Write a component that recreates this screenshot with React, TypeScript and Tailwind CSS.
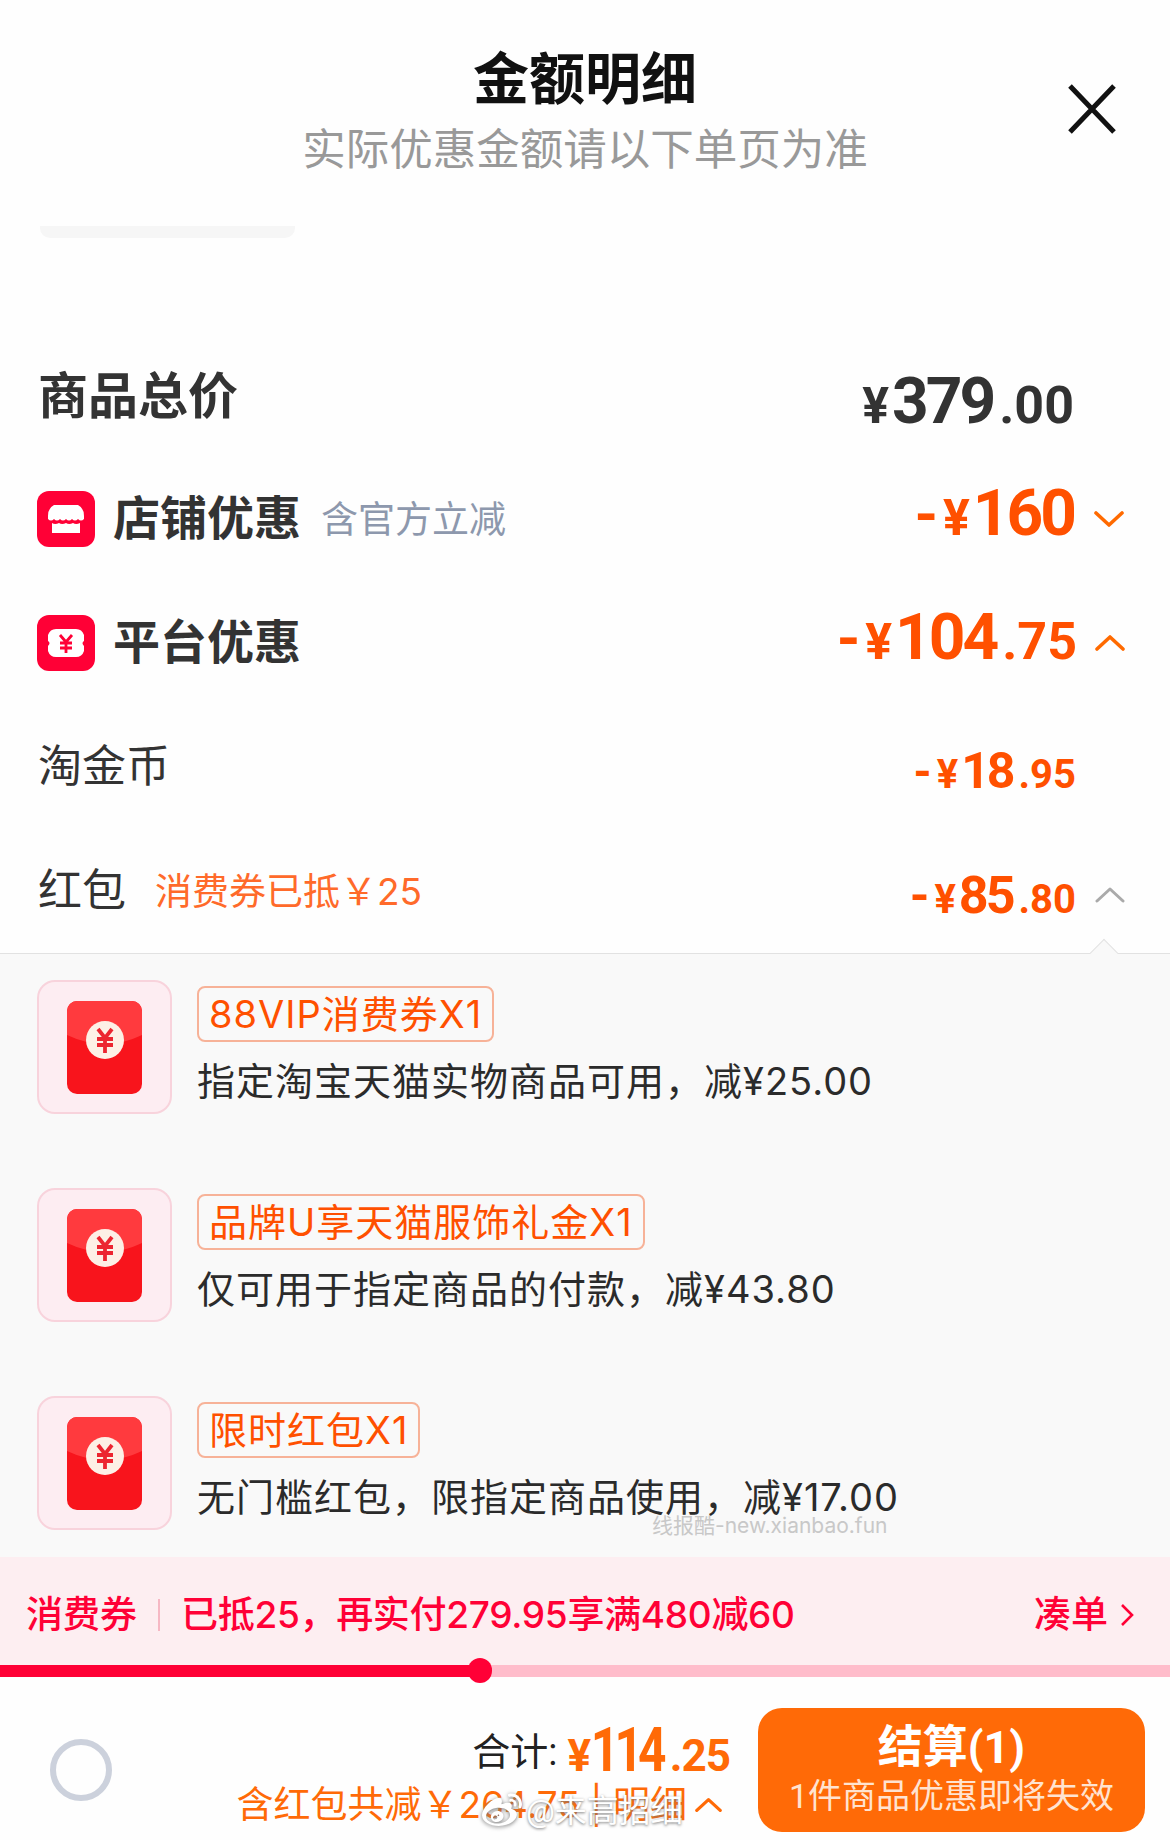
import React from "react";
import { FaWeibo } from "react-icons/fa";

const Amount = ({
  minus,
  minusSize,
  yen,
  big,
  tail,
  bigSize,
  tailSize,
  color,
}: {
  minus?: boolean;
  minusSize?: string;
  yen: string;
  big: string;
  tail?: string;
  bigSize: string;
  tailSize: string;
  color: string;
}) => (
  <div className={`flex items-baseline font-bold ${color}`}>
    {minus && <span className={`${minusSize} mr-[5px]`}>-</span>}
    <span className={`${yen} mr-[3px]`}>¥</span>
    <span className={`${bigSize} tracking-[-3px]`}>{big}</span>
    {tail && <span className={`${tailSize} ml-[6px]`}>{tail}</span>}
  </div>
);

const Chevron = ({ up, color, width = 3.6, size = 30 }: { up?: boolean; color: string; width?: number; size?: number }) => (
  <svg width={size} height="18" viewBox="0 0 30 18" fill="none">
    <path
      d={up ? "M2 15 L15 3 L28 15" : "M2 3 L15 15 L28 3"}
      stroke={color}
      strokeWidth={width}
      strokeLinecap="round"
      strokeLinejoin="round"
    />
  </svg>
);

const RedPacket = () => (
  <div className="flex h-[134px] w-[135px] shrink-0 items-center justify-center rounded-[18px] border-2 border-[#f8d3dc] bg-[#fdedf2]">
    <svg width="75" height="93" viewBox="0 0 75 93">
      <rect width="75" height="93" rx="10" fill="#f8141c" />
      <path d="M0 10 a10 10 0 0 1 10 -10 h55 a10 10 0 0 1 10 10 v24 q-37 18 -75 0 z" fill="#ff3a3e" />
      <circle cx="38" cy="39" r="19" fill="#fdf0e6" />
      <path
        d="M31 28 L38 37 L45 28 M30 38 H46 M30 44 H46 M38 37 V52"
        stroke="#ec2530"
        strokeWidth="3.8"
        fill="none"
      />
    </svg>
  </div>
);

const VoucherRow = ({ tag, desc }: { tag: string; desc: string }) => (
  <div className="flex gap-[25px] pl-[37px]">
    <RedPacket />
    <div className="flex flex-col items-start pt-[6px] font-['Inter','Noto_Sans_CJK_SC',sans-serif]">
      <div className="flex h-[56px] items-center rounded-[8px] border-2 border-[#f7b298] px-[10px] text-[38px] tracking-[1px] text-[#ff5000]">
        {tag}
      </div>
      <div className="mt-[17px] text-[38px] leading-[44px] tracking-[1px] text-[#2b2b2b]">{desc}</div>
    </div>
  </div>
);

const App = () => {
  const orange = "text-[#ff5000]";
  return (
    <div className="relative flex h-[1840px] w-[1170px] flex-col overflow-hidden bg-[#fefefe] font-['Roboto','Noto_Sans_CJK_SC',sans-serif]">
      {/* header */}
      <div className="relative flex h-[226px] shrink-0 flex-col items-center pt-[46px]">
        <div className="text-[56px] font-bold leading-[68px] text-[#111]">金额明细</div>
        <div className="mt-[9px] text-[43.5px] leading-[56px] text-[#999]">实际优惠金额请以下单页为准</div>
        <svg className="absolute left-[1066px] top-[83px]" width="52" height="52" viewBox="0 0 52 52" fill="none">
          <path d="M4 3 L48 49 M48 3 L4 49" stroke="#111" strokeWidth="5" />
        </svg>
      </div>
      <div className="ml-[40px] h-[12px] w-[255px] shrink-0 rounded-b-[10px] bg-[#f6f6f6]" />

      {/* price rows */}
      <div className="mt-[99px] flex h-[120px] shrink-0 items-center pl-[38px] pr-[96px]">
        <div className="text-[50px] font-bold text-[#333]">商品总价</div>
        <div className="ml-auto pt-[10px]">
          <Amount yen="text-[50px]" big="379" tail=".00" bigSize="text-[64px]" tailSize="text-[52px]" color="text-[#333]" />
        </div>
      </div>

      <div className="flex h-[124px] shrink-0 items-center pl-[37px]">
        <svg width="58" height="56" viewBox="0 0 58 56">
          <rect width="58" height="56" rx="12" fill="#ff0036" />
          <path
            d="M17 14 h24 q6 3 6 11 v3 q-3 3 -6 0 q-3 3 -6 0 q-3 3 -6 0 q-3 3 -6 0 q-3 3 -6 0 q-3 3 -6 0 v-3 q0 -8 6 -11z"
            fill="#fff"
          />
          <path d="M15 32 q3 2 7 0 q3 2 7 0 q3 2 7 0 q3 2 7 0 v10 h-28z" fill="#fff" />
        </svg>
        <div className="ml-[18px] text-[47px] font-bold text-[#333]">店铺优惠</div>
        <div className="ml-[20px] pt-[4px] text-[37px] text-[#8d98ad]">含官方立减</div>
        <div className="ml-auto pb-[10px]">
          <Amount minus minusSize="text-[60px]" yen="text-[50px]" big="160" bigSize="text-[64px]" tailSize="text-[52px]" color={orange} />
        </div>
        <div className="flex w-[96px] justify-end pr-[46px]">
          <Chevron color="#ff6a00" />
        </div>
      </div>

      <div className="flex h-[124px] shrink-0 items-center pl-[37px]">
        <svg width="58" height="56" viewBox="0 0 58 56">
          <rect width="58" height="56" rx="12" fill="#ff0036" />
          <path
            d="M19 14 h20 q6 0 8 6 v6 q-3 2 0 5 v5 q-2 6 -8 6 h-20 q-6 0 -8 -6 v-5 q3 -3 0 -5 v-6 q2 -6 8 -6z"
            fill="#fff"
          />
          <path
            d="M23 20 L29 27 L35 20 M23 28 H35 M23 33 H35 M29 27 V38"
            stroke="#ff0036"
            strokeWidth="2.8"
            fill="none"
          />
        </svg>
        <div className="ml-[18px] text-[47px] font-bold text-[#333]">平台优惠</div>
        <div className="ml-auto pb-[10px]">
          <Amount minus minusSize="text-[60px]" yen="text-[50px]" big="104" tail=".75" bigSize="text-[64px]" tailSize="text-[52px]" color={orange} />
        </div>
        <div className="flex w-[93px] justify-end pr-[45px]">
          <Chevron up color="#ff6a00" />
        </div>
      </div>

      <div className="flex h-[124px] shrink-0 items-center pl-[38px] pr-[94px]">
        <div className="text-[44px] text-[#333]">淘金币</div>
        <div className="ml-auto pt-[8px]">
          <Amount minus minusSize="text-[46px]" yen="text-[40px]" big="18" tail=".95" bigSize="text-[50px]" tailSize="text-[40px]" color={orange} />
        </div>
      </div>

      <div className="flex h-[124px] shrink-0 items-center pl-[38px]">
        <div className="text-[44px] text-[#333]">红包</div>
        <div className="ml-[29px] pt-[2px] font-['Inter','Noto_Sans_CJK_SC',sans-serif] text-[37px] text-[#ff6a2a]">消费券已抵￥25</div>
        <div className="ml-auto pt-[10px]">
          <Amount minus minusSize="text-[50px]" yen="text-[40px]" big="85" tail=".80" bigSize="text-[52px]" tailSize="text-[40px]" color={orange} />
        </div>
        <div className="flex w-[94px] justify-end pr-[45px] pt-[8px]">
          <Chevron up color="#aaa" width={3} />
        </div>
      </div>

      {/* red packet list */}
      <div className="relative flex h-[604px] shrink-0 flex-col gap-[74px] border-t border-[#e2e2e2] bg-[#f9f9f9] pt-[26px]">
        <div className="absolute -top-[11px] left-[1094px] h-[20px] w-[20px] rotate-45 border-l border-t border-[#e2e2e2] bg-[#f9f9f9]" />
        <VoucherRow tag="88VIP消费券X1" desc="指定淘宝天猫实物商品可用，减¥25.00" />
        <VoucherRow tag="品牌U享天猫服饰礼金X1" desc="仅可用于指定商品的付款，减¥43.80" />
        <VoucherRow tag="限时红包X1" desc="无门槛红包，限指定商品使用，减¥17.00" />
        <div className="absolute left-[652px] top-[560px] font-['Inter','Noto_Sans_CJK_SC',sans-serif] text-[21px] leading-[24px] text-[#c8c8c8]">线报酷-new.xianbao.fun</div>
      </div>

      {/* coupon bar */}
      <div className="flex h-[108px] shrink-0 items-center bg-[#fdeef1] pl-[26px] pr-[36px] pt-[8px] font-['Inter','Noto_Sans_CJK_SC',sans-serif] text-[37px] font-medium text-[#ff0036]">
        <span>消费券</span>
        <span className="mx-[21px] h-[32px] w-[2px] bg-[#f6b8c4]" />
        <span className="tracking-[-0.3px]">已抵25，再实付279.95享满480减60</span>
        <span className="ml-auto">凑单</span>
        <svg className="ml-[12px]" width="14" height="24" viewBox="0 0 14 24" fill="none">
          <path d="M2 2 L12 12 L2 22" stroke="#ff0036" strokeWidth="2.6" />
        </svg>
      </div>

      {/* progress */}
      <div className="relative h-[12px] shrink-0 bg-[#ffbccb]">
        <div className="h-full w-[470px] bg-[#ff0036]" />
        <div className="absolute left-[468px] top-[-7px] h-[25px] w-[24px] rounded-full bg-[#ff0036]" />
      </div>

      {/* footer */}
      <div className="relative flex flex-1 items-center pl-[50px] pr-[25px] pt-[22px]">
        <div className="h-[62px] w-[62px] rounded-full border-[6px] border-[#ccd1dc]" />
        <div className="ml-auto flex flex-col items-end pt-[7px]">
          <div className="flex items-baseline text-[38px] text-[#222]">
            <span className="-translate-y-[6px]">合计:</span>
            <span className="ml-[10px] text-[44px] font-bold text-[#ff6a07]">¥</span>
            <span className="-ml-[18px] inline-block origin-right scale-x-[0.8] text-[62px] font-bold leading-[62px] tracking-[-6px] text-[#ff6a07]">114</span>
            <span className="ml-[8px] text-[44px] font-bold tracking-[-1px] text-[#ff6a07]">.25</span>
          </div>
          <div className="mt-[-7px] mr-[8px] flex items-center font-['Inter','Noto_Sans_CJK_SC',sans-serif] text-[37px] leading-[46px] text-[#ff6a07]">
            <span>含红包共减￥264.75 | 明细</span>
            <span className="ml-[8px]">
              <Chevron up color="#ff6a07" size={27} />
            </span>
          </div>
        </div>
        <div className="ml-[28px] flex h-[124px] w-[387px] flex-col items-center justify-center rounded-[24px] bg-[#ff6a07] text-white">
          <div className="text-[45px] font-bold leading-[52px]">结算(1)</div>
          <div className="text-[34px] leading-[44px] text-[#ffe3d0]">1件商品优惠即将失效</div>
        </div>
        {/* repost watermark */}
        <div className="absolute left-[482px] top-[114px] flex items-center gap-[4px] text-[32px] leading-[40px] text-white [text-shadow:0_1px_3px_#777]">
          <FaWeibo className="text-[40px] text-white drop-shadow-[0_1px_2px_#777]" />
          <span>@来高招细</span>
        </div>
      </div>
    </div>
  );
};

export default App;
